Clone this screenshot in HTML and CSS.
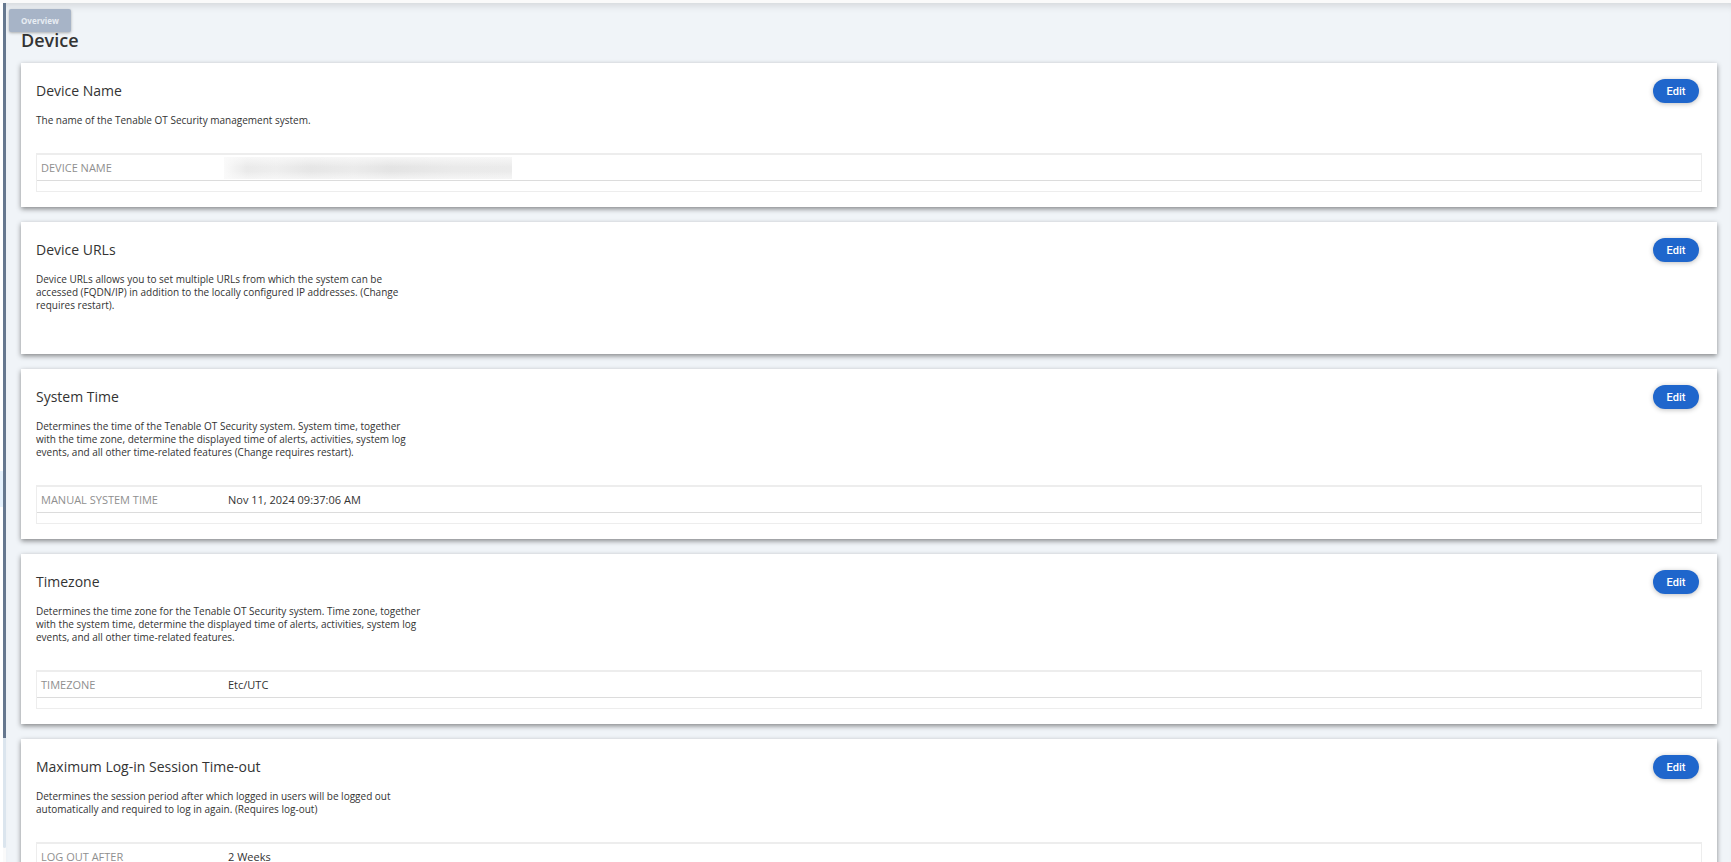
FILE: index.html
```html
<!DOCTYPE html>
<html lang="en">
<head>
<meta charset="utf-8">
<title>Device</title>
<link rel="stylesheet" href="styles.css">
</head>
<body>
<div class="topbar"></div>
<div class="shell">
  <aside class="sidebar">
    <div class="nav"><div class="nav-active"></div></div>
    <div class="track"><div class="thumb"></div></div>
  </aside>
  <main class="content">
    <div class="tooltip" role="tooltip">Overview</div>
    <h1 class="page-title">Device</h1>
    <section class="card">
      <header class="card-head"><h2 class="card-title">Device Name</h2><button class="edit" type="button">Edit</button></header>
      <p class="desc">The name of the Tenable OT Security management system.</p>
      <table class="fields"><tbody><tr><th class="label" scope="row">DEVICE NAME</th><td class="value"><div class="redacted"></div></td></tr></tbody></table>
    </section>
    <section class="card">
      <header class="card-head"><h2 class="card-title">Device URLs</h2><button class="edit" type="button">Edit</button></header>
      <p class="desc">Device URLs allows you to set multiple URLs from which the system can be<br>accessed (FQDN/IP) in addition to the locally configured IP addresses. (Change<br>requires restart).</p>
    </section>
    <section class="card">
      <header class="card-head"><h2 class="card-title">System Time</h2><button class="edit" type="button">Edit</button></header>
      <p class="desc">Determines the time of the Tenable OT Security system. System time, together<br>with the time zone, determine the displayed time of alerts, activities, system log<br>events, and all other time-related features (Change requires restart).</p>
      <table class="fields"><tbody><tr><th class="label" scope="row">MANUAL SYSTEM TIME</th><td class="value">Nov 11, 2024 09:37:06 AM</td></tr></tbody></table>
    </section>
    <section class="card">
      <header class="card-head"><h2 class="card-title">Timezone</h2><button class="edit" type="button">Edit</button></header>
      <p class="desc">Determines the time zone for the Tenable OT Security system. Time zone, together<br>with the system time, determine the displayed time of alerts, activities, system log<br>events, and all other time-related features.</p>
      <table class="fields"><tbody><tr><th class="label" scope="row">TIMEZONE</th><td class="value">Etc/UTC</td></tr></tbody></table>
    </section>
    <section class="card">
      <header class="card-head"><h2 class="card-title">Maximum Log-in Session Time-out</h2><button class="edit" type="button">Edit</button></header>
      <p class="desc">Determines the session period after which logged in users will be logged out<br>automatically and required to log in again. (Requires log-out)</p>
      <table class="fields"><tbody><tr><th class="label" scope="row">LOG OUT AFTER</th><td class="value">2 Weeks</td></tr></tbody></table>
    </section>
  </main>
</div>
</body>
</html>
```

FILE: styles.css
```css
* { box-sizing: border-box; }
body {
  margin: 0;
  height: 100vh;
  display: flex;
  flex-direction: column;
  overflow: hidden;
  background: #f0f4f8;
  color: #333;
  font-family: "Open Sans", sans-serif;
  font-size: 11px;
}
.topbar { flex: none; height: 3px; background: #fafafa; }
.shell { flex: 1; min-height: 0; display: flex; }
.sidebar { flex: none; display: flex; background: #fafafa; }
.nav { width: 3px; padding-top: 468px; background: #fff; }
.nav-active { height: 36px; background: #e6f2fd; }
.track { width: 3px; height: calc(100% - 14px); background: #dbe5ee; border-radius: 0 0 2px 2px; }
.thumb { height: 87%; background: #66788f; }
.content {
  position: relative;
  flex: 1;
  min-width: 0;
  display: flex;
  flex-direction: column;
  gap: 15px;
  padding: 29px 14px 0 15px;
  overflow: hidden;
  box-shadow: inset 0 8px 8px -6px rgba(0, 0, 0, 0.14);
}
.page-title { margin: 0; flex: none; font-size: 18px; line-height: 16px; font-weight: 600; color: #333; }
.tooltip {
  position: absolute;
  top: 6px;
  left: 3px;
  padding: 0 12px;
  line-height: 23px;
  font-size: 8px;
  font-weight: 700;
  color: #e8edf3;
  background: #a7b4c7;
  border-radius: 2px;
  box-shadow: 0 1px 3px rgba(0, 0, 0, 0.3);
}
.card {
  flex: none;
  min-height: 132px;
  padding: 16px 15px 15px;
  background: #fff;
  box-shadow: 0 2px 5px rgba(0, 0, 0, 0.45);
}
.card-head { display: flex; align-items: center; justify-content: space-between; padding-right: 3px; }
.card-title { margin: 0; font-size: 14px; line-height: 24px; font-weight: 400; }
.edit {
  width: 46px;
  height: 24px;
  padding: 0;
  border: 0;
  border-radius: 12px;
  background: #1f66cc;
  color: #fff;
  font: 500 11px Roboto, sans-serif;
  box-shadow: 0 1px 5px rgba(0, 0, 0, 0.25);
}
.desc { margin: 11px 0 26px; max-width: 420px; font-size: 10px; line-height: 13px; }
.fields {
  width: 100%;
  table-layout: fixed;
  border-spacing: 0;
  border: 1px solid #ededed;
  border-top-width: 2px;
  padding-bottom: 10px;
}
.label, .value { height: 26px; padding: 0 4px; border-bottom: 1px solid #dcdcdc; text-align: left; font-weight: 400; line-height: 16px; font-size: 11px; }
.label { width: 184px; color: #8f8f8f; }
.value { padding-left: 7px; }
.redacted {
  width: 288px;
  max-width: 100%;
  height: 22px;
  margin-left: -4px;
  background:
    linear-gradient(rgba(250, 250, 250, 0.8), rgba(250, 250, 250, 0) 45%, rgba(250, 250, 250, 0) 65%, rgba(250, 250, 250, 0.7)),
    linear-gradient(90deg, #fafafa, #eaeaea 8%, #eeeeee 18%, #e6e6e6 30%, #ebebeb 45%, #e4e4e4 58%, #eaeaea 80%, #ebebeb);
}
```
